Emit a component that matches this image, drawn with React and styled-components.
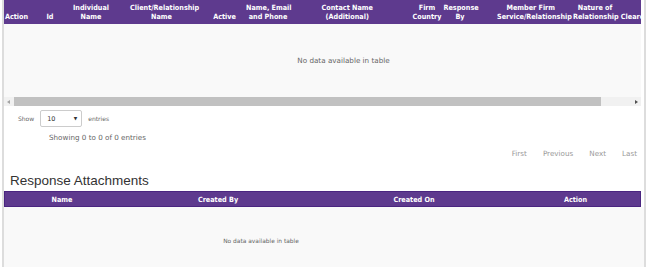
import React from 'react';
import styled, { createGlobalStyle } from 'styled-components';

const GlobalStyle = createGlobalStyle`
  body {
    margin: 0;
    background: #ffffff;
    font-family: "DejaVu Sans", Verdana, sans-serif;
  }
`;

const Page = styled.div`
  margin-left: 2px;
  width: 640px;
  min-height: 267px;
  border-left: 2px solid #dddddd;
  border-right: 2px solid #dddddd;
  overflow: hidden;
`;

const TableWrap = styled.div`
  width: 637px;
  overflow: hidden;
`;

const HeadRow = styled.div`
  display: flex;
  height: 24px;
  background: #5e3a8e;
  color: #ffffff;
  font-family: "DejaVu Sans Condensed", "DejaVu Sans", sans-serif;
  font-weight: bold;
  font-size: 7.2px;
  line-height: 9px;
`;

const HeadCell = styled.div`
  flex: 0 0 auto;
  box-sizing: border-box;
  width: ${({ $w }) => $w}px;
  padding: 0 ${({ $pr }) => $pr || 0}px 3px ${({ $pl }) => $pl || 0}px;
  display: flex;
  flex-direction: column;
  justify-content: flex-end;
  text-align: center;
  white-space: nowrap;
`;

const Body = styled.div`
  display: flex;
  align-items: center;
  justify-content: center;
  height: ${({ $h }) => $h}px;
  padding-left: ${({ $shift }) => $shift || 0}px;
  background: #f9f9f9;
  color: #666666;
  font-size: ${({ $size }) => $size}px;
`;

const ScrollBar = styled.div`
  display: flex;
  align-items: center;
  height: 9px;
  width: 637px;
  background: #f1f1f1;
`;

const Arrow = styled.div`
  width: 0;
  height: 0;
  margin: 0 3px;
  border-top: 2px solid transparent;
  border-bottom: 2px solid transparent;
  ${({ $dir, $color }) =>
    $dir === 'left'
      ? `border-right: 3px solid ${$color};`
      : `border-left: 3px solid ${$color};`}
`;

const Thumb = styled.div`
  height: 9px;
  width: 587px;
  margin-left: 1px;
  background: #c1c1c1;
  flex: 0 0 auto;
`;

const Spacer = styled.div`
  flex: 1;
`;

const Controls = styled.div`
  padding: 4px 0 0 14px;
  color: #666666;
`;

const LengthRow = styled.div`
  display: flex;
  align-items: center;
  gap: 6px;
  font-size: 6px;
`;

const Select = styled.div`
  display: flex;
  align-items: center;
  justify-content: space-between;
  box-sizing: border-box;
  width: 42px;
  height: 17px;
  padding: 0 4px 0 6px;
  border: 1px solid #cccccc;
  border-radius: 2px;
  background: #ffffff;
  color: #333333;
  font-size: 6.5px;
`;

const Caret = styled.span`
  font-size: 4.5px;
  color: #333333;
`;

const Info = styled.div`
  margin: 6px 0 0 31px;
  font-size: 7.2px;
  line-height: 10px;
`;

const Pager = styled.div`
  display: flex;
  justify-content: flex-end;
  padding: 6px 7px 0 0;
`;

const PageBtn = styled.span`
  padding: 0 8px;
  color: #999999;
  font-size: 7.2px;
  line-height: 10px;
  &:last-child {
    padding-right: 0;
  }
`;

const Title = styled.div`
  margin: 14px 0 0 6px;
  font-family: "Liberation Sans", Arial, sans-serif;
  font-size: 13.5px;
  line-height: 16px;
  color: #333333;
`;

const AttachHead = styled.div`
  display: flex;
  box-sizing: border-box;
  width: 637px;
  height: 16px;
  margin-top: 2px;
  background: #5e3a8e;
  border: 1px solid #4a2580;
  color: #ffffff;
  font-family: "DejaVu Sans Condensed", "DejaVu Sans", sans-serif;
  font-weight: bold;
  font-size: 7.2px;
`;

const AttachCell = styled.div`
  flex: 0 0 auto;
  width: ${({ $w }) => $w}px;
  display: flex;
  align-items: center;
  justify-content: center;
`;

const EmptyNote = styled.span`
  margin-right: ${({ $offset }) => $offset}px;
`;

const columns = [
  { top: '', bottom: 'Action', w: 29, pr: 4 },
  { top: '', bottom: 'Id', w: 37.5, pr: 3.5 },
  { top: 'Individual', bottom: 'Name', w: 55.5, pr: 14.5 },
  { top: 'Client/Relationship', bottom: 'Name', w: 67, pl: 4 },
  { top: '', bottom: 'Active', w: 53, pl: 10 },
  { top: 'Name, Email', bottom: 'and Phone', w: 61.5, pr: 17.5 },
  { top: 'Contact Name', bottom: '(Additional)', w: 79.5 },
  { top: 'Firm', bottom: 'Country', w: 56.5, pl: 23.5 },
  { top: 'Response', bottom: 'By', w: 53.5, pr: 20.5 },
  { top: 'Member Firm', bottom: 'Service/Relationship', w: 67.5 },
  { top: 'Nature of', bottom: 'Relationship Cleared', w: 52.5, pl: 8.5 },
];

const attachColumns = [
  { label: 'Name', w: 114 },
  { label: 'Created By', w: 198 },
  { label: 'Created On', w: 194 },
  { label: 'Action', w: 129 },
];

export default function App() {
  return (
    <>
      <GlobalStyle />
      <Page>
        <TableWrap>
          <HeadRow>
            {columns.map((c) => (
              <HeadCell key={c.bottom} $w={c.w} $pl={c.pl} $pr={c.pr}>
                {c.top && <div>{c.top}</div>}
                <div>{c.bottom}</div>
              </HeadCell>
            ))}
          </HeadRow>
          <Body $h={73} $shift={42} $size={7.2}>
            No data available in table
          </Body>
        </TableWrap>
        <ScrollBar>
          <Arrow $dir="left" $color="#a3a3a3" />
          <Thumb />
          <Spacer />
          <Arrow $dir="right" $color="#505050" />
        </ScrollBar>

        <Controls>
          <LengthRow>
            <span>Show</span>
            <Select>
              <span>10</span>
              <Caret>▼</Caret>
            </Select>
            <span>entries</span>
          </LengthRow>
          <Info>Showing 0 to 0 of 0 entries</Info>
        </Controls>
        <Pager>
          <PageBtn>First</PageBtn>
          <PageBtn>Previous</PageBtn>
          <PageBtn>Next</PageBtn>
          <PageBtn>Last</PageBtn>
        </Pager>

        <Title>Response Attachments</Title>
        <AttachHead>
          {attachColumns.map((c) => (
            <AttachCell key={c.label} $w={c.w}>
              {c.label}
            </AttachCell>
          ))}
        </AttachHead>
        <Body $h={68} $size={5.9}>
          <EmptyNote $offset={126}>No data available in table</EmptyNote>
        </Body>
      </Page>
    </>
  );
}
